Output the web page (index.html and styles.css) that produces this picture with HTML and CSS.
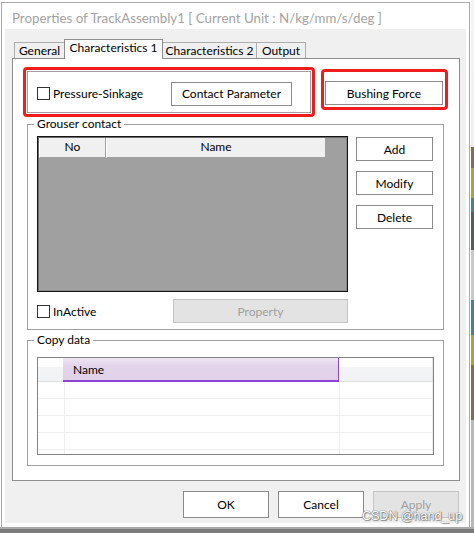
FILE: index.html
```html
<!DOCTYPE html>
<html>
<head>
<meta charset="utf-8">
<title>Properties of TrackAssembly1</title>
<link rel="stylesheet" href="styles.css">
</head>
<body>
<div class="screen">
  <div class="window">
    <div class="titlebar">Properties of TrackAssembly1 [ Current Unit : N/kg/mm/s/deg ]</div>
    <div class="client">
      <div class="tabs">
        <div class="tab t-general">General</div>
        <div class="tab tab-active t-char1">Characteristics 1</div>
        <div class="tab t-char2">Characteristics 2</div>
        <div class="tab t-output">Output</div>
      </div>
      <div class="panel">
        <div class="row-top">
          <div class="mark mark-ps">
            <div class="ps-frame">
              <label class="check"><span class="box"></span>Pressure-Sinkage</label>
              <button class="btn btn-contact">Contact Parameter</button>
            </div>
          </div>
          <div class="mark mark-bf">
            <button class="btn btn-bushing">Bushing Force</button>
          </div>
        </div>

        <fieldset class="group grouser">
          <legend>Grouser contact</legend>
          <div class="grouser-body">
            <div class="grouser-main">
              <div class="listview">
                <div class="lv-inner">
                  <div class="lv-head">
                    <div class="lv-col lv-no">No</div>
                    <div class="lv-col lv-name">Name</div>
                  </div>
                </div>
              </div>
              <div class="side-btns">
                <button class="btn side">Add</button>
                <button class="btn side">Modify</button>
                <button class="btn side">Delete</button>
              </div>
            </div>
            <div class="grouser-foot">
              <label class="check"><span class="box"></span>InActive</label>
              <button class="btn btn-disabled btn-property">Property</button>
            </div>
          </div>
        </fieldset>

        <fieldset class="group copy">
          <legend>Copy data</legend>
          <div class="copy-body">
            <div class="grid">
              <div class="grid-head">
                <div class="gh gh-row"></div>
                <div class="gh gh-name">Name</div>
                <div class="gh gh-rest"></div>
              </div>
              <div class="grid-row"><div class="gc gc1"></div><div class="gc gc2"></div><div class="gc gc3"></div></div>
              <div class="grid-row"><div class="gc gc1"></div><div class="gc gc2"></div><div class="gc gc3"></div></div>
              <div class="grid-row"><div class="gc gc1"></div><div class="gc gc2"></div><div class="gc gc3"></div></div>
              <div class="grid-row"><div class="gc gc1"></div><div class="gc gc2"></div><div class="gc gc3"></div></div>
              <div class="grid-row"><div class="gc gc1"></div><div class="gc gc2"></div><div class="gc gc3"></div></div>
            </div>
          </div>
        </fieldset>
      </div>
      <div class="dialog-btns">
        <button class="btn dbtn">OK</button>
        <button class="btn dbtn">Cancel</button>
        <button class="btn dbtn btn-disabled">Apply</button>
      </div>
    </div>
  </div>
  <div class="desktop"></div>
</div>
<div class="taskbar"></div>
<div class="watermark">CSDN @hand_up</div>
</body>
</html>
```

FILE: styles.css
```css
* { box-sizing: border-box; }

html, body {
  margin: 0;
  padding: 0;
}

body {
  width: 474px;
  height: 533px;
  overflow: hidden;
  background: #ffffff;
  font-family: "Lato", "Noto Sans", "Liberation Sans", sans-serif;
  font-size: 12px;
  color: #000;
  position: relative;
}

.screen {
  display: flex;
  height: 527px;
}

.window {
  margin: 2px 0 0 1px;
  width: 469px;
  height: 525px;
  border: 1px solid #a9a9a9;
  border-bottom: none;
  background: #ffffff;
  padding: 0 3px 4px 3px;
}

.titlebar {
  height: 26px;
  padding: 4px 0 0 7px;
  line-height: 22px;
  font-size: 13.3px;
  color: #a3a3a3;
  white-space: nowrap;
}

.client {
  height: 494px;
  background: #f0f0f0;
  padding: 10px 7px 0 7px;
}

/* tabs */
.tabs {
  display: flex;
  align-items: flex-end;
  height: 19px;
  padding-left: 2px;
}

.tab {
  height: 16px;
  border: 1px solid #adadad;
  border-bottom: none;
  background: #f0f0f0;
  line-height: 15px;
  text-align: center;
  white-space: nowrap;
  margin-left: -1px;
}

.t-general { width: 51px; margin-left: 0; }
.t-char1 { width: 99px; }
.t-char2 { width: 95px; }
.t-output { width: 50px; }

.tab-active {
  position: relative;
  z-index: 1;
  height: 20px;
  margin-bottom: -1px;
  background: #ffffff;
  line-height: 16px;
  border-color: #8d8d8d;
}

/* main panel */
.panel {
  width: 448px;
  height: 423px;
  border: 1px solid #8d8d8d;
  background: #ffffff;
  padding: 8px 0 0 10px;
}

.row-top {
  display: flex;
  align-items: flex-start;
}

.mark {
  border: 3px solid #f01d1d;
  border-radius: 4px;
}

.mark-ps {
  width: 292px;
  height: 50px;
  padding: 1px;
}

.ps-frame {
  height: 42px;
  border: 1px solid #a0a0a0;
  display: flex;
  align-items: center;
  padding: 3px 0 0 9px;
}

.mark-bf {
  width: 127px;
  margin: 2px 0 0 6px;
  padding: 9px 2px 2px 1px;
}

.check {
  display: flex;
  align-items: center;
  white-space: nowrap;
}

.box {
  width: 13px;
  height: 13px;
  border: 1px solid #333333;
  background: #ffffff;
  margin-right: 3px;
}

.btn {
  display: block;
  margin: 0;
  padding: 0;
  height: 24px;
  border: 1px solid #8a8a8a;
  background: #ffffff;
  font-family: inherit;
  font-size: 12px;
  color: #000;
  text-align: center;
  white-space: nowrap;
}

.btn-contact {
  width: 121px;
  margin-left: auto;
  margin-right: 18px;
}

.btn-bushing {
  width: 118px;
}

.btn-disabled {
  background: #e3e3e3;
  border-color: #c4c4c4;
  color: #a0a0a0;
}

/* group boxes */
.group {
  margin: 0;
  padding: 0;
  min-width: 0;
  border: 1px solid #a0a0a0;
  width: 417px;
}

.group legend {
  margin-left: 6px;
  padding: 0 3px;
  line-height: 14px;
  font-size: 12px;
}

.grouser {
  margin: 0 0 0 4px;
}

.grouser-body {
  padding: 5px 0 6px 9px;
}

.grouser-main {
  display: flex;
  align-items: flex-start;
}

.listview {
  width: 311px;
  height: 156px;
  border: 1px solid #141414;
  background: #a0a0a0;
}

.lv-inner {
  height: 100%;
  border: 1px solid #6b6b6b;
  border-right-color: #8a8a8a;
  border-bottom-color: #8a8a8a;
}

.lv-head {
  display: flex;
  height: 20px;
}

.lv-col {
  height: 20px;
  background: #f0f0f0;
  border-left: 1px solid #ffffff;
  border-right: 1px solid #a0a0a0;
  border-bottom: 1px solid #a0a0a0;
  line-height: 18px;
  text-align: center;
}

.lv-no { width: 67px; }
.lv-name { width: 220px; }

.side-btns {
  display: flex;
  flex-direction: column;
  gap: 10px;
  margin: 1px 0 0 8px;
}

.side {
  width: 77px;
}

.grouser-foot {
  display: flex;
  align-items: center;
  justify-content: space-between;
  width: 311px;
  margin-top: 7px;
}

.btn-property {
  width: 175px;
}

/* copy data */
.copy {
  margin: 3px 0 0 4px;
}

.copy-body {
  padding: 10px 0 10px 9px;
}

.grid {
  width: 397px;
  height: 98px;
  border: 1px solid #828282;
  background: #ffffff;
  overflow: hidden;
}

.grid-head {
  display: flex;
  height: 24px;
}

.gh {
  height: 24px;
}

.gh-row,
.gh-rest {
  background: linear-gradient(#ffffff 0, #ffffff 38%, #f3f4f6 40%, #f1f2f4 100%);
  border-bottom: 1px solid #dedede;
}

.gh-row { width: 25px; }

.gh-name {
  width: 276px;
  background: linear-gradient(#efe6f3 0, #e2d4ea 35%, #e1d2e9 100%);
  border-right: 1px solid #8c44d2;
  border-bottom: 2px solid #8c44d2;
  padding-left: 10px;
  line-height: 24px;
  font-size: 12px;
}

.gh-rest {
  flex: 1;
  border-right: 1px solid #e4e4e4;
}

.grid-row {
  display: flex;
  height: 17px;
  border-bottom: 1px solid #efefef;
}

.gc { height: 16px; }
.gc1 { width: 27px; border-right: 1px solid #efefef; }
.gc2 { width: 275px; border-right: 1px solid #efefef; }
.gc3 { flex: 1; border-right: 1px solid #efefef; }

/* dialog buttons */
.dialog-btns {
  display: flex;
  justify-content: flex-end;
  gap: 9px;
  margin-top: 10px;
}

.dbtn {
  width: 86px;
  height: 27px;
}

/* surroundings */
.desktop {
  flex: 1;
  margin-left: 1px;
  background: linear-gradient(
    #f4f4f4 0, #f0f0f0 147px,
    #8a6c45 147px, #8a6c45 168px,
    #b4a41e 168px, #b4a41e 198px,
    #3f8598 198px, #3f8598 212px,
    #5a5a66 212px, #5a5a66 250px,
    #c9c9c9 250px, #c9c9c9 300px,
    #3f8598 300px, #3f8598 335px,
    #b4a41e 335px, #b4a41e 365px,
    #8a6c45 365px, #8a6c45 420px,
    #b9b9b9 420px, #b9b9b9 527px);
}

.taskbar {
  height: 6px;
  border-top: 2px solid #a9a9a9;
  background: #7b7b7b;
}

.watermark {
  position: absolute;
  left: 362px;
  top: 508px;
  font-family: "Liberation Sans", "Noto Sans", sans-serif;
  font-size: 12.5px;
  line-height: 16px;
  color: #ffffff;
  text-shadow: 0 0 1px #6e6e6e, 0 0 1px #6e6e6e, 1px 1px 1px #8a8a8a;
  white-space: nowrap;
}
```
